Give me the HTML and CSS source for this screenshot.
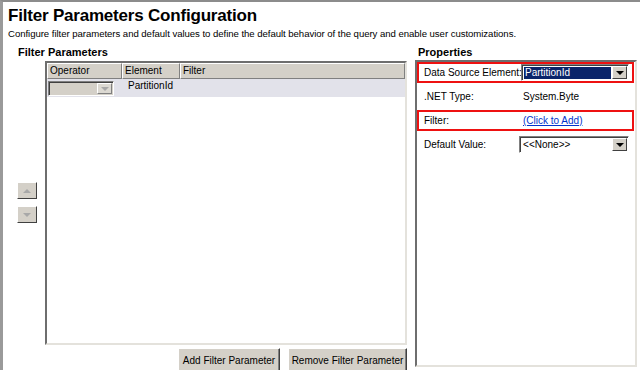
FILE: index.html
```html
<!DOCTYPE html>
<html lang="en">
<head>
  <meta charset="UTF-8" />
  <meta name="viewport" content="width=device-width, initial-scale=1.0" />
  <title>Filter Parameters Configuration</title>
  <link rel="stylesheet" href="styles.css">
</head>
<body>
  <div class="window">
    <div class="header">
      <h1>Filter Parameters Configuration</h1>
      <p>Configure filter parameters and default values to define the default behavior of the query and enable user customizations.</p>
    </div>
    <div class="main">
      <div class="params">
        <h2 class="params-title">Filter Parameters</h2>
        <div class="params-body">
          <div class="movers">
            <div class="mover"><span class="tri up"></span></div>
            <div class="mover"><span class="tri down"></span></div>
          </div>
          <div class="grid">
            <div class="grid-head">
              <div class="cell c-op">Operator</div>
              <div class="cell c-el">Element</div>
              <div class="cell c-fi">Filter</div>
            </div>
            <div class="grid-row">
              <div class="c-op">
                <div class="combo disabled">
                  <span class="combo-text"></span>
                  <span class="combo-btn"><span class="tri down"></span></span>
                </div>
              </div>
              <div class="c-el row-text">PartitionId</div>
              <div class="c-fi"></div>
            </div>
          </div>
        </div>
        <div class="actions">
          <button class="btn-add">Add Filter Parameter</button>
          <button class="btn-remove">Remove Filter Parameter</button>
        </div>
      </div>
      <div class="props">
        <h2 class="props-title">Properties</h2>
        <div class="props-box">
          <div class="prop marked">
            <span class="prop-label">Data Source Element:</span>
            <div class="combo">
              <span class="combo-text selected">PartitionId</span>
              <span class="combo-btn"><span class="tri down dark"></span></span>
            </div>
          </div>
          <div class="prop">
            <span class="prop-label">.NET Type:</span>
            <span class="prop-value">System.Byte</span>
          </div>
          <div class="prop marked">
            <span class="prop-label">Filter:</span>
            <a class="prop-value link" href="#">(Click to Add)</a>
          </div>
          <div class="prop">
            <span class="prop-label">Default Value:</span>
            <div class="combo">
              <span class="combo-text">&lt;&lt;None&gt;&gt;</span>
              <span class="combo-btn"><span class="tri down dark"></span></span>
            </div>
          </div>
        </div>
      </div>
    </div>
  </div>
</body>
</html>
```

FILE: styles.css
```css
body { margin: 0; background: #fff; font-family: "Liberation Sans", Arial, sans-serif; font-size: 10px; color: #000; }
.window { height: 368px; border-top: 2px solid #8c8c8c; border-left: 3px solid #9a9a9a; overflow: hidden; }

.header { padding: 4px 0 0 5px; }
.header h1 { margin: 0; font-size: 17px; font-weight: bold; line-height: 20px; letter-spacing: -0.2px; }
.header p { margin: 1px 0 0; font-size: 9.6px; line-height: 13px; letter-spacing: -0.05px; }

.main { display: flex; gap: 8px; margin-top: 5px; }

.params { width: 404px; }
.params-title, .props-title { margin: 0; font-size: 11px; font-weight: bold; line-height: 14px; }
.params-title { padding-left: 15px; }
.params-body { display: flex; margin-top: 2px; }
.movers { width: 42px; display: flex; flex-direction: column; gap: 7px; padding: 121px 0 0 14px; box-sizing: border-box; }
.mover { width: 18px; height: 15px; background: #d4d0c8; border: 1px solid; border-color: #fff #404040 #404040 #fff; display: flex; align-items: center; justify-content: center; }

.tri { width: 0; height: 0; border-left: 4px solid transparent; border-right: 4px solid transparent; }
.tri.up { border-bottom: 4px solid #a8a8a8; }
.tri.down { border-top: 4px solid #a8a8a8; }
.tri.down.dark { border-top-color: #000; }

.grid { width: 358px; height: 280px; border: 2px solid; border-color: #6e6e6e #e4e2dc #e4e2dc #6e6e6e; background: #fff; }
.grid-head { display: flex; height: 16px; }
.cell { background: #d4d0c8; border: 1px solid; border-color: #fff #808080 #808080 #fff; padding: 0 2px; line-height: 14px; box-sizing: border-box; }
.c-op { width: 75px; }
.c-el { width: 58px; }
.c-fi { flex: 1; }
.grid-row { display: flex; height: 18px; background: #e2e2ea; }
.grid-row .c-op { padding: 2px 0 0 1px; box-sizing: border-box; }
.row-text { padding: 1px 0 0 6px; box-sizing: border-box; }

.combo { display: flex; width: 112px; height: 17px; box-sizing: border-box; border: 1px solid; border-color: #808080 #fff #fff #808080; box-shadow: inset 1px 1px 0 #404040; background: #fff; padding: 2px 1px 1px 2px; }
.combo.disabled { width: 66px; height: 15px; background: #d4d0c8; padding: 1px; }
.combo-text { flex: 1; line-height: 12px; padding-left: 1px; }
.combo-text.selected { background: #0a246a; color: #fff; margin-right: 1px; }
.combo-btn { width: 15px; background: #d4d0c8; border: 1px solid; border-color: #fff #404040 #404040 #fff; box-sizing: border-box; display: flex; align-items: center; justify-content: center; margin: -1px 0 0; }
.combo.disabled .combo-btn { margin: 0; border-color: #fff #808080 #808080 #fff; background: #dcd9d2; }

.actions { display: flex; justify-content: flex-end; gap: 8px; margin-top: 3px; }
.actions button { font-family: inherit; font-size: 10px; height: 24px; padding: 0; background: #d4d0c8; border: 1px solid; border-color: #fff #404040 #404040 #fff; box-shadow: inset -1px -1px 0 #808080; }
.btn-add { width: 102px; }
.btn-remove { width: 119px; }

.props { width: 222px; }
.props-title { padding-left: 3px; }
.props-box { margin-top: 1px; height: 307px; border: 2px solid; border-color: #6e6e6e #e4e2dc #e4e2dc #6e6e6e; padding: 0 1px 0 0; box-sizing: border-box; }
.prop { display: flex; align-items: center; height: 21px; padding: 0 3px 0 5px; margin-bottom: 3px; box-sizing: border-box; border: 2px solid transparent; }
.prop.marked { border-color: #ee1111; }
.prop-label { width: 97px; white-space: nowrap; }
.prop-value { margin-left: 2px; }
.link { color: #0033cc; text-decoration: underline; }
```
